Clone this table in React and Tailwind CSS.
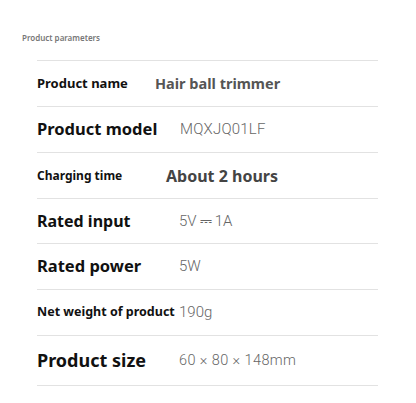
import React from 'react';

const bold = 'font-bold font-["Noto_Sans",sans-serif]';
const light = 'font-light text-[#666] font-["Roboto",sans-serif]';

const rows = [
  { label: 'Product name', labelCls: 'text-[13px]', labelW: 'w-[118px]', value: 'Hair ball trimmer', valueCls: `text-[14.5px] text-[#555] ${bold}`, h: 'h-[46px]' },
  { label: 'Product model', labelCls: 'text-[16.5px]', labelW: 'w-[143px]', value: 'MQXJQ01LF', valueCls: `text-[15px] tracking-[0.2px] ${light}`, h: 'h-[46px]' },
  { label: 'Charging time', labelCls: 'text-[12px]', labelW: 'w-[129px]', value: 'About 2 hours', valueCls: `text-[16px] text-[#444] ${bold}`, h: 'h-[46px]' },
  { label: 'Rated input', labelCls: 'text-[16px]', labelW: 'w-[142px]', value: '5V\u2009\u2393\u20091A', valueCls: `text-[15px] ${light}`, h: 'h-[45px]' },
  { label: 'Rated power', labelCls: 'text-[16.5px]', labelW: 'w-[142px]', value: '5W', valueCls: `text-[15px] ${light}`, h: 'h-[46px]' },
  { label: 'Net weight of product', labelCls: 'text-[12.5px]', labelW: 'w-[142px]', value: '190g', valueCls: `text-[15px] ${light}`, h: 'h-[46px]' },
  { label: 'Product size', labelCls: 'text-[18px]', labelW: 'w-[142px]', value: '60 × 80 × 148mm', valueCls: `text-[14.5px] tracking-[0.4px] ${light}`, h: 'h-[50px]' },
];

export default function App() {
  return (
    <div className="w-[416px] h-[403px] bg-white overflow-hidden font-['Noto_Sans',sans-serif]">
      <div className="pt-[32px] pl-[22px] h-[60px] text-[8px] font-semibold text-[#777]">
        Product parameters
      </div>
      <div className="ml-[37px] w-[341px] border-t border-[#e2e2e2]">
        {rows.map((r) => (
          <div key={r.label} className={`flex items-center border-b border-[#e2e2e2] ${r.h}`}>
            <div className={`shrink-0 font-bold text-[#111] whitespace-nowrap ${r.labelW} ${r.labelCls}`}>
              {r.label}
            </div>
            <div className={`whitespace-nowrap ${r.valueCls}`}>{r.value}</div>
          </div>
        ))}
      </div>
    </div>
  );
}
